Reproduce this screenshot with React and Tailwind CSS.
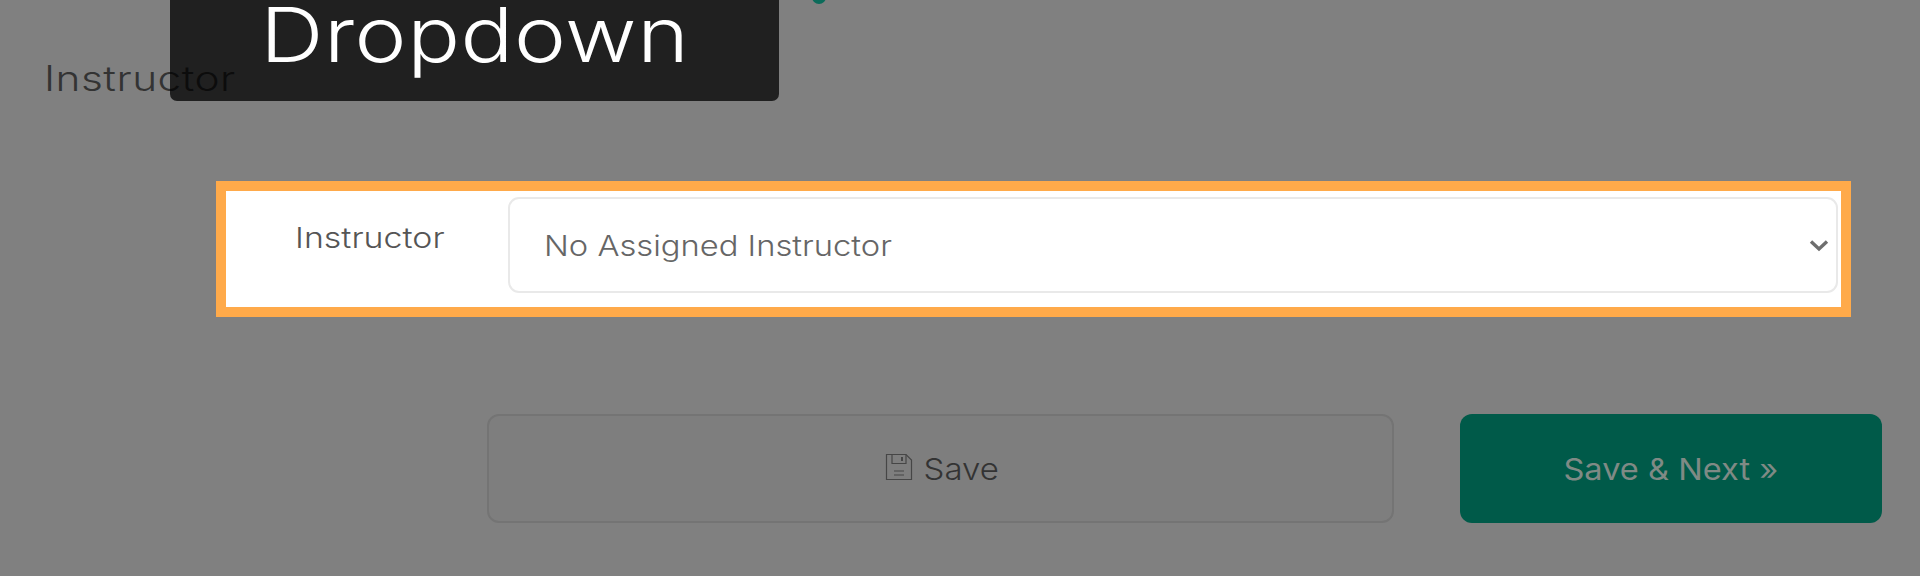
export default function App() {
  const font = "font-['Inter','Liberation_Sans',sans-serif]";
  return (
    <div className={`relative w-[1920px] h-[576px] overflow-hidden bg-[#808080] ${font}`}>
      {/* page heading */}
      <div className="pl-[44px] pt-[56px] h-[181px]">
        <h2 className="inline-block origin-left scale-x-[1.21] text-[35px] leading-[44px] font-light tracking-[0.4px] text-[#333333]">Instructor</h2>
      </div>

      {/* highlighted row */}
      <div className="ml-[216px] w-[1635px] h-[136px] border-[10.5px] border-[#ffaa4a] bg-white flex items-start">
        <div className="w-[281.5px] pl-[69px] pt-[29px]">
          <label className="inline-block origin-left scale-x-[1.21] text-[28px] leading-[36px] font-light text-[#555555]">Instructor</label>
        </div>
        <div className="mt-[5.8px] w-[1330px] h-[96px] rounded-[11px] border-2 border-[#e9e9e9] flex items-center justify-between pl-[34px] pr-[7px]">
          <span className="inline-block origin-left scale-x-[1.168] text-[28px] leading-[36px] font-light text-[#666666] pt-[3px]">No Assigned Instructor</span>
          <svg width="20" height="13" viewBox="0 0 20 13" fill="none" className="mt-[1px]">
            <path d="M2 2.5 L10 10 L18 2.5" stroke="#6e6e6e" strokeWidth="3.4" />
          </svg>
        </div>
      </div>

      {/* action buttons */}
      <div className="flex items-start pl-[487px] pt-[97px]">
        <button className="w-[907px] h-[109px] rounded-[12px] border-2 border-[#747474] bg-[#7e7e7e] flex items-center justify-center gap-[14px] text-[30px] font-light text-[#333333]">
          <svg width="28" height="28" viewBox="0 0 28 28" fill="none" stroke="#464646" strokeWidth="1.2" className="mb-[3px]">
            <path d="M1.5 1.5 H21 L26.5 7 V26.5 H1.5 Z" />
            <path d="M7 1.5 V10.5 H21 V1.5" />
            <path d="M17 4 V8" strokeWidth="2" />
            <path d="M9 18 H19 M9 22 H19" />
          </svg>
          <span className="inline-block scale-x-[1.1] pt-[1px]">Save</span>
        </button>
        <button className="ml-[66px] w-[422px] h-[109px] rounded-[12px] bg-[#005a49] flex items-center justify-center text-[30px] text-[#7f8a85]">
          <span className="inline-block scale-x-[1.087] pt-[1px]">Save &amp; Next »</span>
        </button>
      </div>

      {/* tooltip-style overlay */}
      <div className="absolute left-[170px] top-0 w-[609px] h-[101px] rounded-b-[7px] bg-black/75 flex justify-center">
        <span className="inline-block scale-x-[1.155] text-[76px] leading-[68px] font-light tracking-[0.5px] text-white">Dropdown</span>
      </div>

      {/* cut-off marker at the top edge */}
      <div className="absolute left-[812px] -top-[10.5px] w-[14px] h-[14px] rounded-full bg-[#0b6b5a]" />
    </div>
  );
}
